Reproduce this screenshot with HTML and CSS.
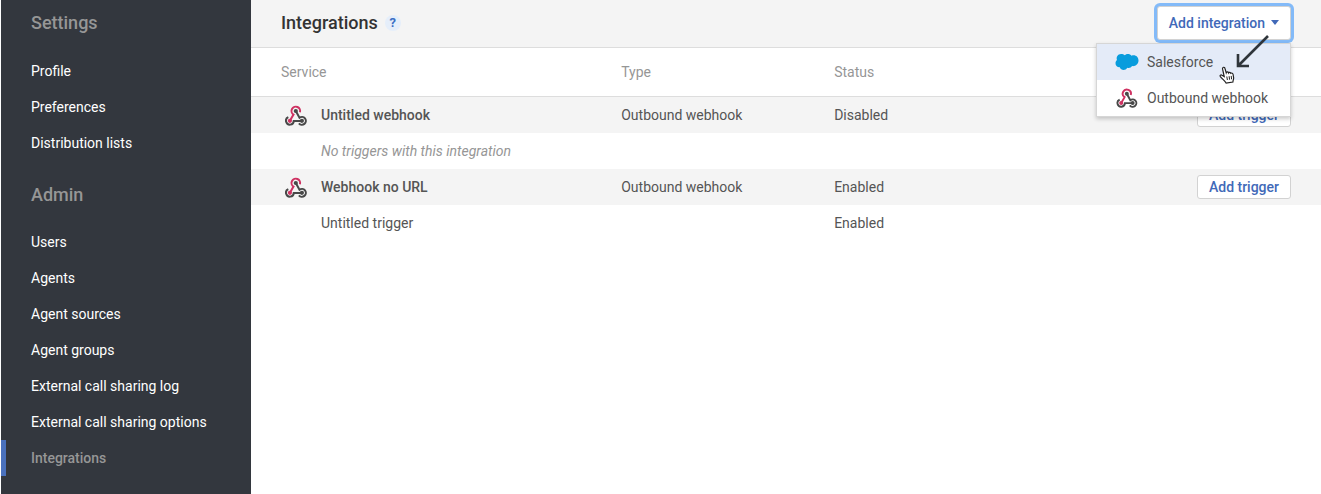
FILE: index.html
```html
<!DOCTYPE html>
<html lang="en">
<head>
<meta charset="utf-8">
<title>Integrations</title>
<link rel="stylesheet" href="styles.css">
</head>
<body>
<svg class="sprite" aria-hidden="true">
  <symbol id="webhook" viewBox="0 0 22 21">
    <g fill="none" stroke-width="2">
      <path stroke="#484848" d="M3.300 12.200A3.900 3.900 0 1 0 8.800 15.900H16.900"/>
      <path stroke="#484848" d="M10.800 6 14.500 12.800A3.900 3.900 0 1 1 13.900 18.300"/>
      <path stroke="#cf3262" d="M14.900 7.300A4.300 4.300 0 1 0 8.500 9.600L4.900 15.800"/>
    </g>
    <circle cx="4.900" cy="15.800" r="2.100" fill="#cf3262"/>
    <circle cx="10.800" cy="6" r="2.100" fill="#484848"/>
    <circle cx="16.900" cy="15.800" r="2.100" fill="#484848"/>
  </symbol>
</svg>
<div class="app">
  <nav class="sidebar" aria-label="Settings">
    <h2 class="group-title">Settings</h2>
    <ul class="menu">
      <li><a class="menu-link" href="#profile">Profile</a></li>
      <li><a class="menu-link" href="#preferences">Preferences</a></li>
      <li><a class="menu-link" href="#lists">Distribution lists</a></li>
    </ul>
    <h2 class="group-title group-title-admin">Admin</h2>
    <ul class="menu">
      <li><a class="menu-link" href="#users">Users</a></li>
      <li><a class="menu-link" href="#agents">Agents</a></li>
      <li><a class="menu-link" href="#sources">Agent sources</a></li>
      <li><a class="menu-link" href="#groups">Agent groups</a></li>
      <li><a class="menu-link" href="#log">External call sharing log</a></li>
      <li><a class="menu-link" href="#options">External call sharing options</a></li>
      <li><a class="menu-link current" href="#integrations" aria-current="page">Integrations</a></li>
    </ul>
  </nav>
  <main class="content">
    <header class="topbar">
      <h1 class="title">Integrations</h1>
      <button class="help" type="button" aria-label="Help">?</button>
      <div class="dropdown">
        <button class="button add-integration" type="button" aria-haspopup="menu" aria-expanded="true">Add integration<span class="caret"></span></button>
        <div class="popup" role="menu">
          <button class="option highlighted" type="button" role="menuitem">
            <svg class="option-icon" viewBox="0 0 24 18" aria-hidden="true"><path fill="#089cdd" d="M9.800 2.200C11.500.4 15 .5 16.500 2.700 20.300 1.400 23.500 3.800 23.500 7.600c0 3.700-3.200 6-6.400 5.500-1.100 1.700-3 2.200-4.900 1.600-1.500 3.100-6.300 2.900-7.400-.4C2 14.400.4 12.200.5 9.900c.1-1.400.8-2.300 1.500-2.900C.900 4 2.900 1 6 1c1.600 0 2.800.4 3.800 1.200z"/></svg>
            Salesforce
          </button>
          <button class="option" type="button" role="menuitem">
            <svg class="option-icon" aria-hidden="true"><use href="#webhook"/></svg>
            Outbound webhook
          </button>
        </div>
        <svg class="arrow" viewBox="0 0 38 38" aria-hidden="true"><path d="M35 3 5 33M5 21v12h11" fill="none" stroke="#2f353b" stroke-width="2.600"/></svg>
        <svg class="pointer" viewBox="0 0 16 18" aria-hidden="true"><path d="M5.200 10.500 3.600 3.200C3.200 1 5.500.5 6 2.500l1.200 4.300c.4-1.200 2-1.200 2.400.1.500-.9 1.900-.7 2.200.4.900-.7 2.100 0 2.300 1.200l.5 3.200c.2 1.500-.6 2.500-.7 4.300l-6.800 1.100C5.800 14.500 3.300 13.200 1.400 10.700.5 9.400 1.900 8.300 3 9.200z" fill="#fff" stroke="#222" stroke-width="1.200"/><path d="m7.800 10.500.6 3.500m1.700-3.800.5 3.500m1.600-3.800.4 3.400" fill="none" stroke="#222"/></svg>
      </div>
    </header>
    <table class="table">
      <colgroup><col class="col-service"><col class="col-type"><col class="col-status"><col></colgroup>
      <thead>
        <tr><th scope="col">Service</th><th scope="col">Type</th><th scope="col">Status</th><td></td></tr>
      </thead>
      <tbody>
        <tr class="service-row">
          <td><span class="service"><svg class="service-icon" aria-hidden="true"><use href="#webhook"/></svg>Untitled webhook</span></td>
          <td>Outbound webhook</td><td>Disabled</td>
          <td class="action"><button class="button add-trigger" type="button">Add trigger</button></td>
        </tr>
        <tr><td class="trigger none" colspan="4">No triggers with this integration</td></tr>
        <tr class="service-row">
          <td><span class="service"><svg class="service-icon" aria-hidden="true"><use href="#webhook"/></svg>Webhook no URL</span></td>
          <td>Outbound webhook</td><td>Enabled</td>
          <td class="action"><button class="button add-trigger" type="button">Add trigger</button></td>
        </tr>
        <tr><td class="trigger">Untitled trigger</td><td></td><td>Enabled</td><td></td></tr>
      </tbody>
    </table>
  </main>
</div>
</body>
</html>
```

FILE: styles.css
```css
* { box-sizing: border-box; }
body {
  margin: 0;
  background: #fff;
  color: #555;
  font: 14px/20px Roboto, "Liberation Sans", sans-serif;
}
button { font: inherit; color: inherit; cursor: pointer; }
.sprite { display: none; }
.app { display: flex; min-height: 100vh; padding-left: 1px; }

.sidebar { flex: 0 0 250px; padding-top: 11px; background: #33373e; }
.group-title {
  margin: 0 0 18px;
  padding-left: 30px;
  color: #969696;
  font-size: 18px;
  font-weight: 500;
  line-height: 24px;
}
.group-title-admin { margin: 22px 0 17px; }
.menu { margin: 0; padding: 0; list-style: none; }
.menu-link {
  display: block;
  padding: 8px 8px 8px 30px;
  color: #fff;
  text-decoration: none;
}
.menu-link.current {
  padding-left: 25px;
  border-left: 5px solid #4a71bd;
  color: #969696;
  font-weight: 500;
}

.content { flex: 1; min-width: 0; }
.topbar {
  display: flex;
  align-items: center;
  height: 48px;
  padding: 0 30px 2px;
  border-bottom: 1px solid #ddd;
  background: #f4f4f4;
}
.title { margin: 0; color: #333; font-size: 18px; font-weight: 500; line-height: 24px; }
.help {
  width: 16px;
  height: 16px;
  margin-left: 7px;
  padding: 0;
  border: 0;
  border-radius: 50%;
  background: #e5eefa;
  color: #3a6fc4;
  font-size: 13px;
  font-weight: 700;
  line-height: 16px;
}
.dropdown { position: relative; margin-left: auto; }
.button {
  border: 1px solid #d2d2d2;
  border-radius: 3px;
  background: #fff;
  color: #4169b8;
  font-weight: 500;
}
.add-integration {
  display: flex;
  align-items: center;
  gap: 6px;
  height: 34px;
  padding: 0 11px;
  box-shadow: 0 0 0 3px #83baf8;
}
.caret { border: 4px solid transparent; border-top: 5px solid #4169b8; border-bottom: 0; }
.popup {
  position: absolute;
  top: 37px;
  right: 0;
  z-index: 1;
  width: 195px;
  border: 1px solid #d6d6d6;
  background: #fff;
  box-shadow: 0 2px 4px rgba(0, 0, 0, .2);
}
.option {
  display: flex;
  align-items: center;
  gap: 8px;
  width: 100%;
  height: 36px;
  padding: 0 18px;
  border: 0;
  background: #fff;
  text-align: left;
}
.option.highlighted { background: #e4ebf8; }
.option-icon { width: 24px; height: 20px; }
.arrow { position: absolute; z-index: 2; top: 27px; right: 20px; width: 38px; height: 38px; }
.pointer { position: absolute; z-index: 2; top: 60px; right: 56px; width: 16px; height: 18px; }

.table { width: 100%; border-spacing: 0; table-layout: fixed; }
.col-service { width: 34.6%; }
.col-type { width: 19.9%; }
.col-status { width: 19.9%; }
.table td, .table th { height: 36px; padding: 0; text-align: left; font-weight: 400; }
.table thead th, .table thead td { height: 49px; border-bottom: 1px solid #ddd; color: #969696; }
.table th:first-child, .table td:first-child { padding-left: 30px; }
.service-row { background: #f4f4f4; }
.service { display: flex; align-items: center; gap: 14px; padding-left: 4px; font-weight: 500; }
.service-icon { width: 22px; height: 21px; }
.table td.trigger { padding-left: 70px; }
.table td.none { color: #969696; font-style: italic; }
.table td.action { padding-right: 30px; text-align: right; }
.add-trigger { height: 24px; padding: 0 11px; line-height: 22px; }
```
